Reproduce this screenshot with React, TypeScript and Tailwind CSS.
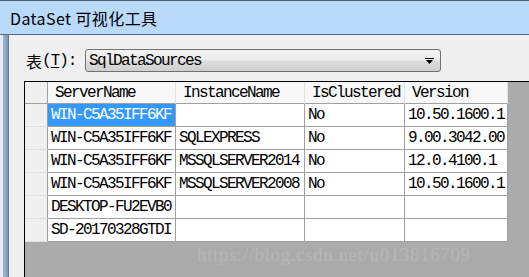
import React from "react";

const mono = "font-[family-name:Liberation_Mono,monospace] text-[16px] tracking-[-1.6px] leading-none";

const rows: { c: string[]; sel?: boolean }[] = [
  { c: ["WIN-C5A35IFF6KF", "", "No", "10.50.1600.1"], sel: true },
  { c: ["WIN-C5A35IFF6KF", "SQLEXPRESS", "No", "9.00.3042.00"] },
  { c: ["WIN-C5A35IFF6KF", "MSSQLSERVER2014", "No", "12.0.4100.1"] },
  { c: ["WIN-C5A35IFF6KF", "MSSQLSERVER2008", "No", "10.50.1600.1"] },
  { c: ["DESKTOP-FU2EVB0", "", "", ""] },
  { c: ["SD-20170328GTDI", "", "", ""] },
];

const widths = ["w-[128px]", "w-[129px]", "w-[100px]", "w-[103px]"];
const headers = ["ServerName", "InstanceName", "IsClustered", "Version"];

export default function App() {
  return (
    <div className="w-[529px] h-[277px] overflow-hidden flex flex-col bg-[#f0f0f0]">
      {/* Title bar */}
      <div className="h-[35px] shrink-0 border-t border-b border-t-[#4f5f70] border-b-[#56687a] bg-[#b9dafa] flex items-center pl-[10px]">
        <span className="font-[family-name:Noto_Sans_CJK_SC,sans-serif] text-[16px] text-black leading-none tracking-[0.4px]">
          DataSet 可视化工具
        </span>
      </div>
      <div className="flex-1 flex min-h-0">
        {/* window frame */}
        <div className="w-[8px] shrink-0 flex">
          <div className="w-[3px] bg-[#e6ecf2]" />
          <div className="w-[5px] bg-gradient-to-r from-[#9fb6d6] to-[#7f98bf]" />
        </div>
        <div className="flex-1 flex flex-col border-l border-[#6d7a88] bg-[#f0f0f0] min-h-0">
          {/* label + combo */}
          <div className="flex items-center pt-[14px] pl-[17px] h-[37px] shrink-0">
            <div className="flex items-center w-[59px]">
              <span className="font-[family-name:Noto_Sans_CJK_SC,sans-serif] text-[16px] leading-none text-black">表</span>
              <span className={mono + " text-black tracking-[-1px]"}>
                (<span className="underline underline-offset-2">T</span>):
              </span>
            </div>
            <div className="w-[356px] h-[23px] rounded-[3px] border border-[#707070] bg-[linear-gradient(to_bottom,#f3f3f3_0%,#ebebeb_48%,#dddddd_52%,#cfcfcf_100%)] flex items-center pl-[3px] pr-[6px]">
              <span className={mono + " flex-1 text-black"}>SqlDataSources</span>
              <svg width="9" height="6" viewBox="0 0 9 6">
                <rect x="0" y="0" width="9" height="1" fill="#000" />
                <polygon points="1,2 8,2 4.5,6" fill="#000" />
              </svg>
            </div>
          </div>
          {/* grid */}
          <div className="flex-1 ml-[15px] mt-[9px] border-l border-t border-black bg-[#ababab] relative overflow-hidden">
            {/* header row */}
            <div className="flex h-[22px]">
              <div className="w-[23px] shrink-0 bg-[#f0f0f0] border-r border-b border-[#a0a0a0]" />
              {headers.map((h, i) => (
                <div
                  key={h}
                  className={`${widths[i]} shrink-0 bg-[#f8f8f8] border-b border-[#a0a0a0] border-r border-r-[#e2e2e2] flex items-center pl-[7px] text-black ${mono}`}
                >
                  {h}
                </div>
              ))}
            </div>
            {rows.map((r, ri) => (
              <div key={ri} className="flex h-[23px]">
                <div className="w-[23px] shrink-0 bg-[#f0f0f0] border-r border-[#a0a0a0] border-b border-b-[#e0e0e0]" />
                {r.c.map((t, ci) => {
                  const sel = r.sel && ci === 0;
                  return (
                    <div
                      key={ci}
                      className={`${widths[ci]} shrink-0 border-r border-b border-[#a0a0a0] flex items-center pl-[3px] ${mono} ${
                        sel ? "bg-[#3399ff] text-white" : "bg-white text-black"
                      }`}
                    >
                      {t}
                    </div>
                  );
                })}
              </div>
            ))}
            <div className="absolute left-[172px] top-[163px] font-[family-name:Liberation_Serif,serif] text-[19px] leading-none text-[#b6b6b6] tracking-[0.6px] whitespace-nowrap">
              https://blog.csdn.net/u013816709
            </div>
          </div>
        </div>
      </div>
    </div>
  );
}
